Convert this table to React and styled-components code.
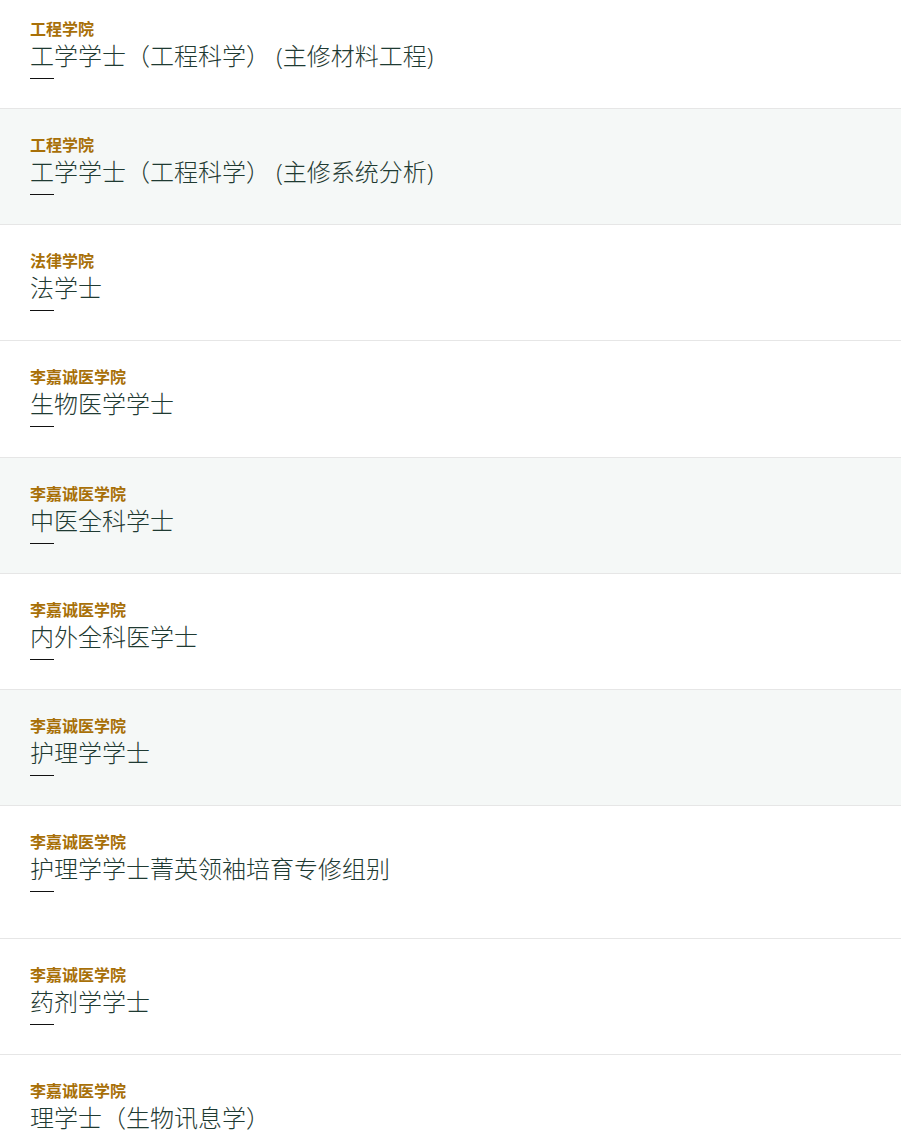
import React from "react";
import styled, { createGlobalStyle } from "styled-components";

const GlobalStyle = createGlobalStyle`
  html, body { margin: 0; padding: 0; background: #ffffff; }
  body {
    font-family: "Open Sans", "Noto Sans CJK SC", sans-serif;
    overflow: hidden;
  }
`;

const List = styled.ul`
  list-style: none;
  margin: -7px 0 0 0;
  padding: 0;
`;

const Row = styled.li`
  display: flex;
  flex-direction: column;
  align-items: flex-start;
  padding: 25px 30px ${(p) => (p.$tall ? "46.3px" : "29.15px")};
  background: ${(p) => (p.$shaded ? "#f5f8f7" : "#ffffff")};
  border-bottom: 1px solid #e6e6e6;
`;

const Faculty = styled.span`
  font-family: "Noto Sans CJK SC", sans-serif;
  font-size: 16px;
  font-weight: 700;
  line-height: 20px;
  color: #a87008;
`;

const Degree = styled.span`
  font-family: "Open Sans", "Noto Sans CJK SC", sans-serif;
  font-size: 24px;
  font-weight: 300;
  line-height: 35px;
  color: #1f3a32;
`;

const Rule = styled.span`
  display: block;
  width: 24px;
  height: 1px;
  margin-top: 5px;
  background: #111111;
`;

const items = [
  { faculty: "工程学院", degree: "工学学士（工程科学） (主修材料工程)" },
  { faculty: "工程学院", degree: "工学学士（工程科学） (主修系统分析)", shaded: true },
  { faculty: "法律学院", degree: "法学士" },
  { faculty: "李嘉诚医学院", degree: "生物医学学士" },
  { faculty: "李嘉诚医学院", degree: "中医全科学士", shaded: true },
  { faculty: "李嘉诚医学院", degree: "内外全科医学士" },
  { faculty: "李嘉诚医学院", degree: "护理学学士", shaded: true },
  { faculty: "李嘉诚医学院", degree: "护理学学士菁英领袖培育专修组别", tall: true },
  { faculty: "李嘉诚医学院", degree: "药剂学学士" },
  { faculty: "李嘉诚医学院", degree: "理学士（生物讯息学）" },
];

export default function App() {
  return (
    <>
      <GlobalStyle />
      <List>
        {items.map((it, i) => (
          <Row key={i} $shaded={it.shaded} $tall={it.tall}>
            <Faculty>{it.faculty}</Faculty>
            <Degree>{it.degree}</Degree>
            <Rule />
          </Row>
        ))}
      </List>
    </>
  );
}
